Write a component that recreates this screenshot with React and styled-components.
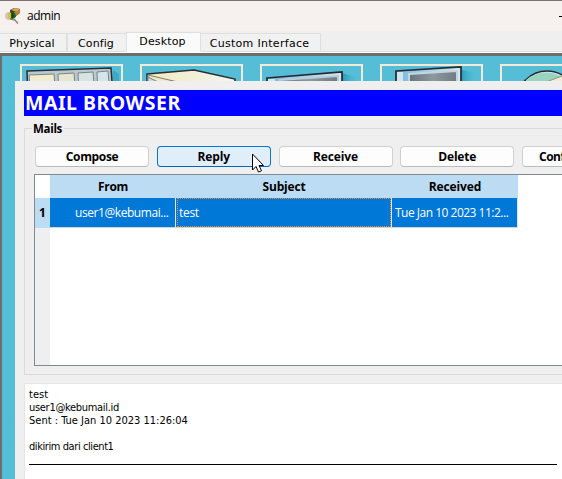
import React from "react";
import styled, { createGlobalStyle } from "styled-components";

const GlobalStyle = createGlobalStyle`
  * { box-sizing: border-box; }
  body { margin: 0; overflow: hidden; }
`;

const verdana = `"DejaVu Sans", sans-serif`;
const tahoma = `"DejaVu Sans Condensed", "DejaVu Sans", sans-serif`;
const segoe = `"Open Sans", "Noto Sans", sans-serif`;

const Window = styled.div`
  width: 562px;
  height: 479px;
  overflow: hidden;
  display: flex;
  flex-direction: column;
  background: #efefef;
  border-top: 1px solid #777274;
  color: #000;
`;

const TitleBar = styled.header`
  flex: none;
  height: 30px;
  display: flex;
  align-items: center;
  justify-content: space-between;
  padding-left: 5px;
  background: #f6f1ee;
`;

const TitleGroup = styled.div`
  display: flex;
  align-items: center;
  gap: 5px;
  svg { display: block; }
`;

const Title = styled.span`
  font: 12px/16px ${segoe};
  letter-spacing: -0.45px;
`;

const Minimize = styled.span`
  width: 3px;
  height: 1px;
  background: #000;
`;

const TabBar = styled.nav`
  flex: none;
  height: 22px;
  display: flex;
  align-items: flex-end;
  background: #efefef;
  border-bottom: 1px solid #fdfdfd;
  box-shadow: inset 0 -1px #dfdfdf;
`;

const Tab = styled.div`
  width: ${(p) => p.$width}px;
  height: ${(p) => (p.$active ? 20 : 19)}px;
  padding-top: 1px;
  padding-right: 2px;
  background: ${(p) => (p.$active ? "#fafafa" : "#f1f1f1")};
  border: 1px solid #dfdfdf;
  border-left-width: ${(p) => (p.$first || p.$afterActive ? 0 : 1)}px;
  border-right-width: ${(p) => (p.$beforeActive ? 0 : 1)}px;
  border-bottom-color: ${(p) => (p.$active ? "#fafafa" : "#dfdfdf")};
  font: 11px/${(p) => (p.$active ? 16 : 17)}px ${verdana};
  letter-spacing: ${(p) => p.$spacing || 0}px;
  text-align: center;
  white-space: nowrap;
`;

const Desktop = styled.main`
  flex: 1;
  min-height: 0;
  display: flex;
  flex-direction: column;
  border-top: 3px solid #6d6d6d;
  border-left: 2px solid #6d6d6d;
  background: #55bdd5;
`;

const Shortcuts = styled.div`
  flex: none;
  height: 25px;
  padding: 8px 0 0 18px;
  display: flex;
  gap: 17px;
  overflow: hidden;
`;

const Shortcut = styled.div`
  flex: none;
  width: 103px;
  height: 100px;
  border: 2px solid #f0ead8;
  svg { display: block; }
`;

const MailPanel = styled.section`
  flex: 1;
  min-height: 0;
  margin-left: 13px;
  padding: 9px 0 0 9px;
  display: flex;
  flex-direction: column;
  background: #efefef;
`;

const Banner = styled.h1`
  flex: none;
  margin: 0;
  height: 26px;
  padding-left: 1px;
  background: #00f;
  color: #fff;
  font: bold 19.5px/26px "Noto Sans", sans-serif;
  letter-spacing: 0.5px;
`;

const Group = styled.fieldset`
  flex: none;
  margin: 5px 0 0;
  width: 600px;
  height: 254px;
  min-width: 0;
  padding: 0 0 0 9px;
  border: 1px solid #dadada;
`;

const Legend = styled.legend`
  height: 14px;
  margin-left: -2px;
  padding: 0 2px 0 1px;
  font: bold 11.5px/15px ${segoe};
  letter-spacing: -0.3px;
`;

const Actions = styled.div`
  display: flex;
  gap: 7.75px;
  padding: 11px 0 0 1px;
`;

const Button = styled.button`
  flex: none;
  width: 114px;
  height: 21px;
  padding: 0;
  border: 1px solid ${(p) => (p.$hot ? "#0078d4" : "#d0d0d0")};
  border-bottom-color: ${(p) => (p.$hot ? "#0067c0" : "#bababa")};
  border-radius: 4px;
  background: ${(p) => (p.$hot ? "#e0eef9" : "#fdfdfd")};
  color: #000;
  font: bold 12px/19px ${segoe};
  letter-spacing: ${(p) => p.$spacing || 0}px;
  white-space: nowrap;
  ${(p) => p.$clipped && "text-align: left; padding-left: 16px;"}
`;

const Table = styled.div`
  margin-top: 7px;
  width: 580px;
  height: 192px;
  border: 1px solid #828790;
  background: #fff;
  display: grid;
  grid-template-columns: 15px 126px 216px 126px;
  grid-template-rows: 23px 30px 1fr;
`;

const Corner = styled.div``;

const HeadCell = styled.div`
  background: #bcdcf4;
  text-align: center;
  font: bold 12px/23px ${segoe};
  letter-spacing: ${(p) => p.$spacing || 0}px;
`;

const RowNumber = styled(HeadCell)`
  line-height: 29px;
`;

const Cell = styled.div`
  background: #0078d7;
  border-right: 1px solid #d8e6f2;
  border-bottom: 1px solid #d0d4d8;
  color: #fff;
  font: 12px/29px ${segoe};
  letter-spacing: ${(p) => p.$spacing || 0}px;
  padding-left: ${(p) => p.$pad}px;
  white-space: nowrap;
  overflow: hidden;
`;

const FocusedCell = styled(Cell)`
  padding: 0;
`;

const FocusRing = styled.div`
  height: 29px;
  margin-left: 1px;
  border: 1px dotted #ff8728;
  padding-left: 1px;
  line-height: 27px;
`;

const Gutter = styled.div`
  background: #efefef;
`;

const Message = styled.article`
  flex: 1;
  min-height: 0;
  margin-top: 8px;
  padding: 4px 0 0 4px;
  border-top: 1px solid #e5e5e5;
  border-left: 1px solid #e5e5e5;
  background: #fff;
`;

const Line = styled.p`
  margin: 0;
  height: 13px;
  font: 11px/13px ${tahoma};
  letter-spacing: ${(p) => p.$spacing || 0}px;
  white-space: pre;
`;

const Rule = styled.hr`
  width: 528px;
  height: 1px;
  margin: 11px 0 0;
  border: 0;
  background: #000;
`;

const Pointer = styled.svg`
  position: absolute;
  left: 251px;
  top: 153px;
`;

const AppIcon = () => (
  <svg width="17" height="17" viewBox="0 0 17 17">
    <path d="M9 11l4 4.5" stroke="#858585" strokeWidth="1.5" />
    <path d="M5 2l4-2 6 1v4l-4 3-6-1z" fill="#4b4024" />
    <path d="M6 2l4-2 5 1-3 3z" fill="#d2a858" />
    <path d="M9 4l6-2v3l-5 3z" fill="#b88938" />
    <circle cx="4" cy="8" r="4" fill="#ccc7bf" />
    <path d="M3 6l3-2 4 1 1 4-3 2-4-1z" fill="#176024" />
    <path d="M3 5h3v5H3z" fill="#e9b934" />
    <path d="M7 5l2 3-2 2z" fill="#123c17" />
    <path d="M5 11l4 1" stroke="#806b48" strokeWidth="1.2" />
  </svg>
);

const PanelIcon = () => (
  <svg width="99" height="30">
    <path d="M91 4l6 4v22h-7z" fill="#258fae" opacity=".45" />
    <path d="M5 5L89 2l2 28H6z" fill="#bac8d2" stroke="#292e33" strokeWidth="1.5" />
    <path d="M7 9l25-1 2 22H9z" fill="#f0ecce" stroke="#7b8388" />
    <path d="M36 8l16-1 2 23H37z" fill="#e7e7cf" stroke="#7b8388" />
    <path d="M56 7l15-1 2 24H57z" fill="#d8e4df" stroke="#7b8388" />
    <path d="M75 6l11-1 2 25H76z" fill="#d3e6ea" stroke="#7b8388" />
  </svg>
);

const BoxIcon = () => (
  <svg width="99" height="30">
    <defs>
      <linearGradient id="boxTop"><stop stopColor="#f2e9bd" /><stop offset="1" stopColor="#f3f5ef" /></linearGradient>
    </defs>
    <path d="M5 8L52 4l41 9v17H5z" fill="url(#boxTop)" stroke="#292d30" strokeWidth="1.5" />
    <path d="M6 9l34 8H6z" fill="#f3e8c2" stroke="#777d7f" />
    <path d="M6 11l12 6H6z" fill="#cbdde2" stroke="#777d7f" />
  </svg>
);

const MonitorIcon = ({ narrow }) => (
  <svg width="99" height="30">
    <defs>
      <linearGradient id="screen"><stop stopColor="#66757d" /><stop offset=".5" stopColor="#8e989d" /><stop offset="1" stopColor="#707b83" /></linearGradient>
      <linearGradient id="frame"><stop stopColor="#7ab7e2" /><stop offset="1" stopColor="#d8e7ee" /></linearGradient>
      <linearGradient id="shade"><stop stopColor="#168cad" stopOpacity=".8" /><stop offset="1" stopColor="#55bdd5" stopOpacity="0" /></linearGradient>
    </defs>
    {narrow ? (
      <>
        <path d="M78 3l17 5v22H78z" fill="url(#shade)" />
        <path d="M14 5L79 1v29H14z" fill="url(#frame)" stroke="#25292e" strokeWidth="1.7" />
        <path d="M15 6h6v24h-6z" fill="#d2e6f2" />
        <path d="M27 8l48-3v25H27z" fill="url(#screen)" stroke="#c4d5df" strokeWidth="2" />
      </>
    ) : (
      <>
        <path d="M80 7l17 5v18H80z" fill="url(#shade)" />
        <path d="M5 12L80 6v24H5z" fill="url(#frame)" stroke="#25292e" strokeWidth="1.7" />
        <path d="M6 13h7v17H6z" fill="#d2e6f2" />
        <path d="M18 14l58-4v20H18z" fill="url(#screen)" stroke="#b8cddc" strokeWidth="2" />
      </>
    )}
  </svg>
);

const DiscIcon = () => (
  <svg width="99" height="30">
    <circle cx="45" cy="35" r="30" fill="#d8eeee" stroke="#282c30" strokeWidth="1.5" />
    <path d="M45 35L24 14q18-14 38-2z" fill="#98d4c0" />
    <path d="M45 35L40 17l21-7 13 13z" fill="#f0edce" />
    <path d="M44 16L60 10" stroke="#8b9186" />
  </svg>
);

export default function App() {
  return (
    <>
      <GlobalStyle />
      <Window>
        <TitleBar>
          <TitleGroup><AppIcon /><Title>admin</Title></TitleGroup>
          <Minimize />
        </TitleBar>
        <TabBar>
          <Tab $width={67} $first $spacing={0.1}>Physical</Tab>
          <Tab $width={59} $beforeActive $spacing={0.1}>Config</Tab>
          <Tab $width={75} $active $spacing={0.15}>Desktop</Tab>
          <Tab $width={120} $afterActive $spacing={0.3}>Custom Interface</Tab>
        </TabBar>
        <Desktop>
          <Shortcuts>
            <Shortcut><PanelIcon /></Shortcut>
            <Shortcut><BoxIcon /></Shortcut>
            <Shortcut><MonitorIcon /></Shortcut>
            <Shortcut><MonitorIcon narrow /></Shortcut>
            <Shortcut><DiscIcon /></Shortcut>
          </Shortcuts>
          <MailPanel>
            <Banner>MAIL BROWSER</Banner>
            <Group>
              <Legend>Mails</Legend>
              <Actions>
                <Button $spacing={-0.35}>Compose</Button>
                <Button $hot $spacing={-0.1}>Reply</Button>
                <Button $spacing={-0.1}>Receive</Button>
                <Button $spacing={-0.2}>Delete</Button>
                <Button $clipped $spacing={-0.5}>Configure Mail</Button>
              </Actions>
              <Table>
                <Corner />
                <HeadCell $spacing={-0.3}>From</HeadCell>
                <HeadCell $spacing={-0.2}>Subject</HeadCell>
                <HeadCell $spacing={-0.1}>Received</HeadCell>
                <RowNumber>1</RowNumber>
                <Cell $pad={25} $spacing={-0.43}>user1@kebumai...</Cell>
                <FocusedCell $spacing={-0.3}><FocusRing>test</FocusRing></FocusedCell>
                <Cell $pad={3} $spacing={-0.5}>Tue Jan 10 2023 11:2...</Cell>
                <Gutter />
              </Table>
            </Group>
            <Message>
              <Line>test</Line>
              <Line $spacing={-0.3}>user1@kebumail.id</Line>
              <Line>Sent : Tue Jan 10 2023 11:26:04</Line>
              <Line> </Line>
              <Line $spacing={-0.42}>dikirim dari client1</Line>
              <Rule />
            </Message>
          </MailPanel>
        </Desktop>
      </Window>
      <Pointer width="13" height="21" viewBox="0 0 13 21">
        <path d="M1.5 1v16l3.5-3.5L7.5 19l3-1.2L8 12.5h4.5z" fill="#fff" stroke="#000" />
      </Pointer>
    </>
  );
}
